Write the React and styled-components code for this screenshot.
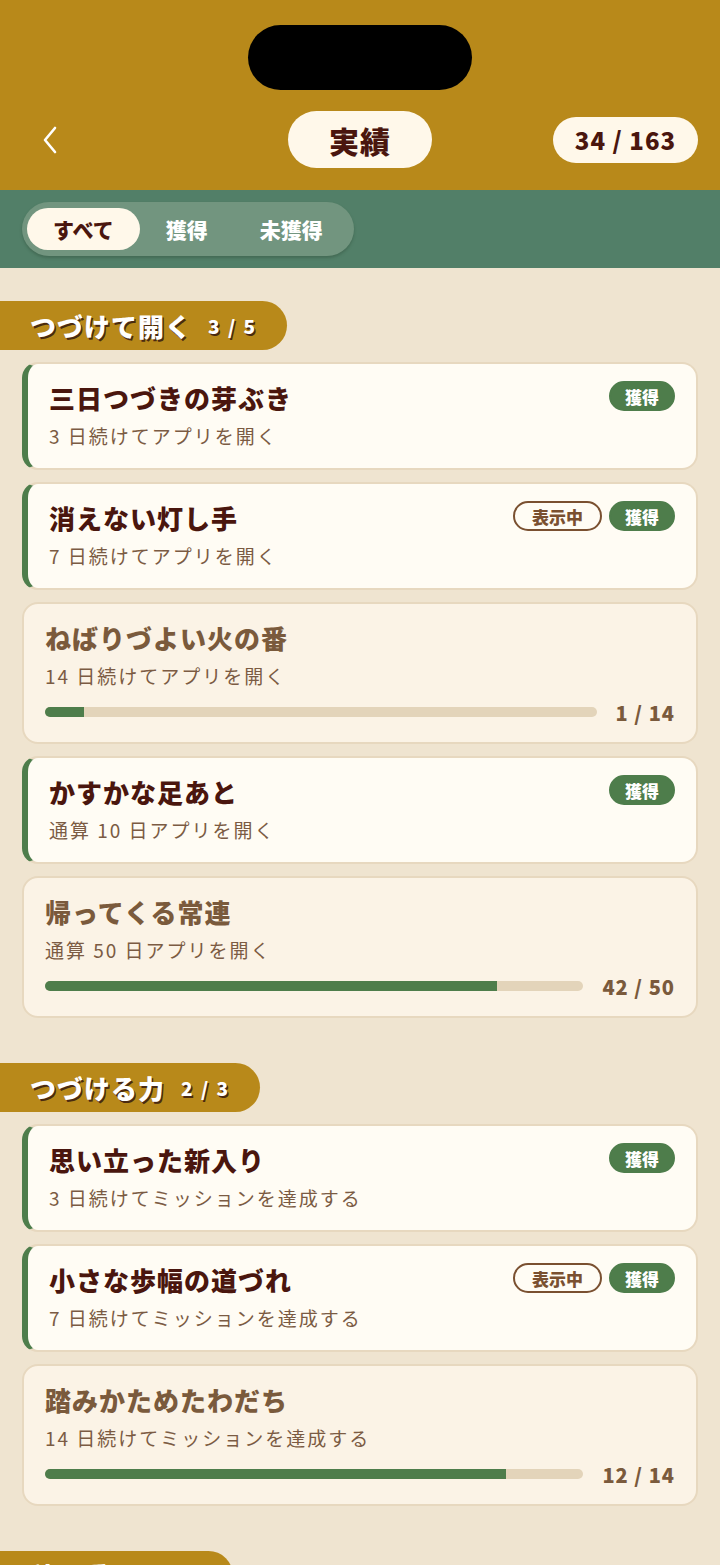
import styled, { createGlobalStyle } from "styled-components";

const GlobalStyle = createGlobalStyle`
  html, body {
    margin: 0;
    padding: 0;
    background: #efe4d0;
  }
  body {
    font-family: "Noto Sans CJK JP", "Noto Sans", sans-serif;
  }
  * {
    box-sizing: border-box;
  }
`;

const sections = [
  {
    title: "つづけて開く",
    count: "3 / 5",
    items: [
      { title: "三日つづきの芽ぶき", desc: "3 日続けてアプリを開く", earned: true },
      { title: "消えない灯し手", desc: "7 日続けてアプリを開く", earned: true, showing: true },
      { title: "ねばりづよい火の番", desc: "14 日続けてアプリを開く", progress: 1, total: 14 },
      { title: "かすかな足あと", desc: "通算 10 日アプリを開く", earned: true },
      { title: "帰ってくる常連", desc: "通算 50 日アプリを開く", progress: 42, total: 50 },
    ],
  },
  {
    title: "つづける力",
    count: "2 / 3",
    items: [
      { title: "思い立った新入り", desc: "3 日続けてミッションを達成する", earned: true },
      { title: "小さな歩幅の道づれ", desc: "7 日続けてミッションを達成する", earned: true, showing: true },
      { title: "踏みかためたわだち", desc: "14 日続けてミッションを達成する", progress: 12, total: 14 },
    ],
  },
  {
    title: "積み重ね",
    count: "1 / 4",
    items: [
      { title: "はじめの一歩", desc: "通算 1 回ミッションを達成する", earned: true },
      { title: "小さな積み木", desc: "通算 10 回ミッションを達成する", progress: 6, total: 10 },
    ],
  },
];

const Page = styled.div`
  min-height: 100vh;
  background: #efe4d0;
`;

const TopBar = styled.header`
  background: #b8891a;
  display: flex;
  flex-direction: column;
  align-items: center;
  padding: 25px 22px 22px;
`;

const Island = styled.div`
  width: 224px;
  height: 65px;
  border-radius: 33px;
  background: #000;
`;

const NavRow = styled.div`
  width: 100%;
  margin-top: 21px;
  display: grid;
  grid-template-columns: 1fr auto 1fr;
  align-items: center;
`;

const BackButton = styled.button`
  justify-self: start;
  background: none;
  border: none;
  padding: 0 0 0 20px;
  display: flex;
  cursor: pointer;
`;

const TitlePill = styled.h1`
  margin: 0;
  width: 144px;
  height: 57px;
  border-radius: 29px;
  background: #fff8ea;
  color: #4a160e;
  font-size: 30px;
  font-weight: 900;
  letter-spacing: 1px;
  display: flex;
  align-items: center;
  justify-content: center;
`;

const CountPill = styled.div`
  justify-self: end;
  width: 145px;
  height: 46px;
  border-radius: 23px;
  background: #fff8ea;
  color: #4a160e;
  font-size: 24px;
  font-weight: 900;
  letter-spacing: 1px;
  display: flex;
  align-items: center;
  justify-content: center;
`;

const TabBar = styled.nav`
  background: #527f68;
  padding: 12px 22px;
  display: flex;
`;

const Segments = styled.div`
  display: flex;
  padding: 6px 5px;
  border-radius: 27px;
  background: #72957f;
  box-shadow: 0 2px 3px rgba(40, 70, 50, 0.35);
`;

const Tab = styled.div`
  height: 42px;
  padding: 0 26px;
  border-radius: 21px;
  display: flex;
  align-items: center;
  font-size: 21px;
  font-weight: 900;
  background: ${(p) => (p.$active ? "#fff8ea" : "transparent")};
  color: ${(p) => (p.$active ? "#4a160e" : "#ffffff")};
`;

const Body = styled.main`
  padding: 33px 0 40px;
  display: flex;
  flex-direction: column;
  gap: 45px;
`;

const Section = styled.section`
  display: flex;
  flex-direction: column;
  gap: 12px;
`;

const SectionHead = styled.div`
  align-self: flex-start;
  height: 49px;
  padding: 0 30px;
  border-radius: 0 25px 25px 0;
  background: #b8891a;
  display: flex;
  align-items: center;
  gap: 16px;
  color: #fff;
  text-shadow: 1.5px 1.5px 0 #4a2a10;
`;

const SectionTitle = styled.span`
  font-size: 26px;
  font-weight: 900;
  letter-spacing: 1px;
`;

const SectionCount = styled.span`
  font-size: 19px;
  font-weight: 900;
  letter-spacing: 2px;
`;

const List = styled.div`
  padding: 0 22px;
  display: flex;
  flex-direction: column;
  gap: 12px;
`;

const Card = styled.div`
  border: 2px solid #e7d8bf;
  border-left: ${(p) => (p.$earned ? "6px solid #4e7d4b" : "2px solid #e7d8bf")};
  border-radius: 16px;
  background: ${(p) => (p.$earned ? "#fffcf4" : "#fbf3e6")};
  padding: ${(p) => (p.$earned ? "18px 21px 20px 21px" : "18px 21px 18px 21px")};
  display: flex;
  flex-direction: column;
`;

const CardTop = styled.div`
  display: flex;
  align-items: center;
  justify-content: space-between;
  height: 32px;
`;

const CardTitle = styled.div`
  font-size: 26px;
  font-weight: 900;
  letter-spacing: 1px;
  line-height: 32px;
  color: ${(p) => (p.$earned ? "#4a160e" : "#7a5a3c")};
`;

const Badges = styled.div`
  display: flex;
  gap: 7px;
  margin-top: -4px;
`;

const Badge = styled.span`
  height: 30px;
  padding: 0 ${(p) => (p.$outline ? "17px" : "14px")};
  border-radius: 15px;
  display: flex;
  align-items: center;
  font-size: 17px;
  font-weight: 900;
  background: ${(p) => (p.$outline ? "transparent" : "#4e7d4b")};
  color: ${(p) => (p.$outline ? "#7a5030" : "#ffffff")};
  border: 2px solid ${(p) => (p.$outline ? "#7a5030" : "#4e7d4b")};
`;

const CardDesc = styled.div`
  margin-top: 10px;
  font-size: 19px;
  letter-spacing: 2px;
  line-height: 24px;
  color: #7b5b43;
`;

const ProgressRow = styled.div`
  margin-top: 12px;
  height: 24px;
  display: flex;
  align-items: center;
  gap: 19px;
`;

const Track = styled.div`
  flex: 1;
  height: 10px;
  border-radius: 5px;
  background: #e3d4ba;
  overflow: hidden;
`;

const Fill = styled.div`
  height: 100%;
  background: #4e7d4b;
`;

const ProgressText = styled.span`
  font-size: 20px;
  font-weight: 900;
  color: #7a5a3c;
  letter-spacing: 1px;
`;

function Chevron() {
  return (
    <svg width="16" height="28" viewBox="0 0 16 28" fill="none">
      <path d="M13 2 L3 14 L13 26" stroke="#fff" strokeWidth="2.6" strokeLinecap="round" strokeLinejoin="round" />
    </svg>
  );
}

function AchievementCard({ item }) {
  const earned = !!item.earned;
  return (
    <Card $earned={earned}>
      <CardTop>
        <CardTitle $earned={earned}>{item.title}</CardTitle>
        {earned && (
          <Badges>
            {item.showing && <Badge $outline>表示中</Badge>}
            <Badge>獲得</Badge>
          </Badges>
        )}
      </CardTop>
      <CardDesc>{item.desc}</CardDesc>
      {!earned && (
        <ProgressRow>
          <Track>
            <Fill style={{ width: `${(item.progress / item.total) * 100}%` }} />
          </Track>
          <ProgressText>
            {item.progress} / {item.total}
          </ProgressText>
        </ProgressRow>
      )}
    </Card>
  );
}

export default function App() {
  return (
    <Page>
      <GlobalStyle />
      <TopBar>
        <Island />
        <NavRow>
          <BackButton aria-label="戻る">
            <Chevron />
          </BackButton>
          <TitlePill>実績</TitlePill>
          <CountPill>34 / 163</CountPill>
        </NavRow>
      </TopBar>
      <TabBar>
        <Segments>
          <Tab $active>すべて</Tab>
          <Tab>獲得</Tab>
          <Tab>未獲得</Tab>
        </Segments>
      </TabBar>
      <Body>
        {sections.map((s) => (
          <Section key={s.title}>
            <SectionHead>
              <SectionTitle>{s.title}</SectionTitle>
              <SectionCount>{s.count}</SectionCount>
            </SectionHead>
            <List>
              {s.items.map((it) => (
                <AchievementCard key={it.title} item={it} />
              ))}
            </List>
          </Section>
        ))}
      </Body>
    </Page>
  );
}
